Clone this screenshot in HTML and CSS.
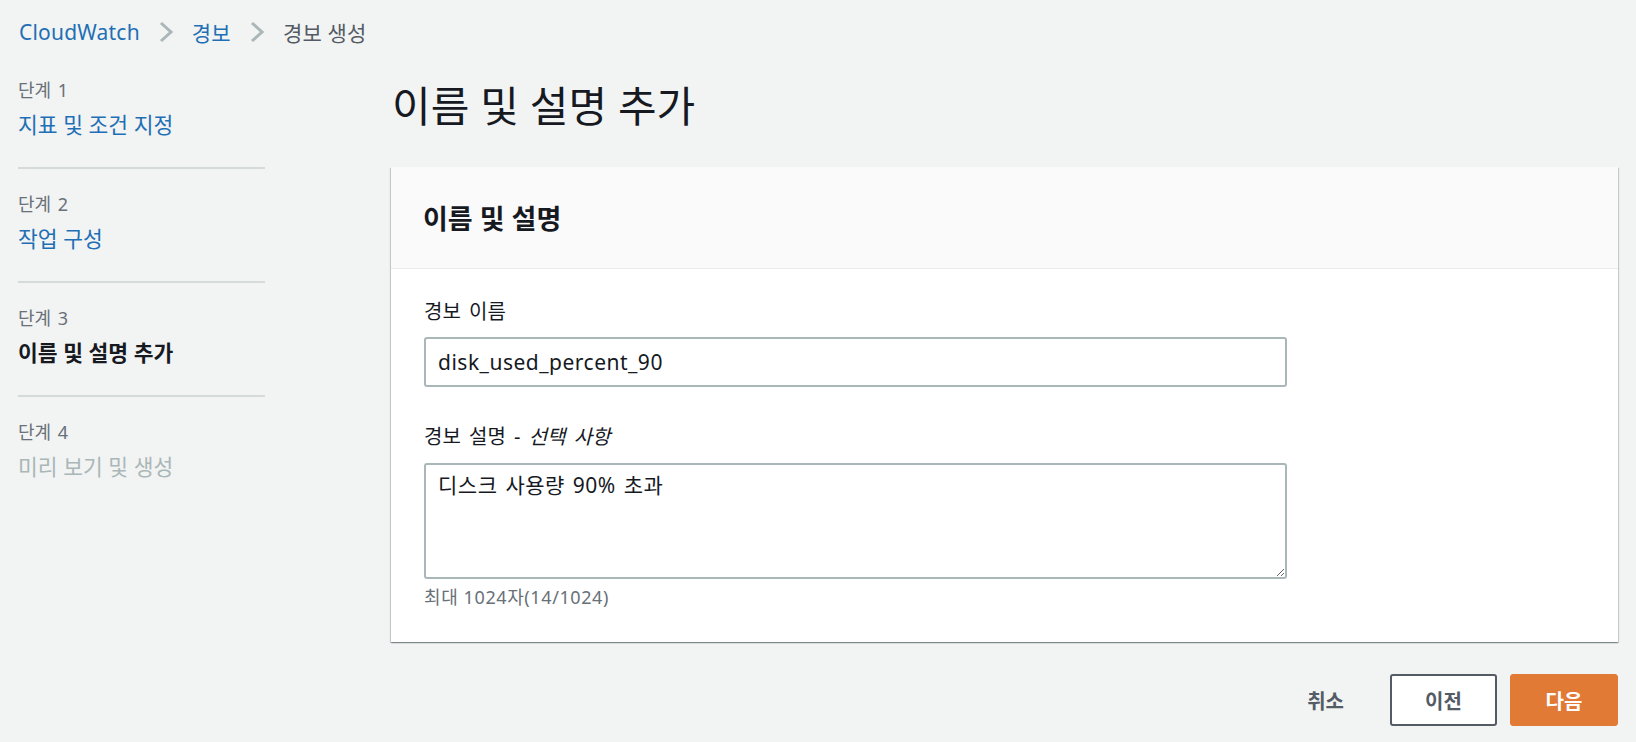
FILE: index.html
```html
<!DOCTYPE html>
<html lang="ko">
<head>
<meta charset="utf-8">
<title>경보 생성 - CloudWatch</title>
<link rel="stylesheet" href="styles.css">
</head>
<body>
<div class="page">
  <nav class="breadcrumb">
    <a class="crumb-link" href="#">CloudWatch</a>
    <svg class="chev" width="16" height="22" viewBox="0 0 16 22"><path d="M3 2 L13 11 L3 20" fill="none" stroke="#aab7b8" stroke-width="3"/></svg>
    <a class="crumb-link" href="#">경보</a>
    <svg class="chev" width="16" height="22" viewBox="0 0 16 22"><path d="M3 2 L13 11 L3 20" fill="none" stroke="#aab7b8" stroke-width="3"/></svg>
    <span class="crumb-current">경보 생성</span>
  </nav>
  <div class="layout">
    <aside class="steps">
      <div class="step">
        <div class="step-label">단계 1</div>
        <a class="step-title link" href="#">지표 및 조건 지정</a>
      </div>
      <div class="step">
        <div class="step-label">단계 2</div>
        <a class="step-title link" href="#">작업 구성</a>
      </div>
      <div class="step">
        <div class="step-label">단계 3</div>
        <div class="step-title current">이름 및 설명 추가</div>
      </div>
      <div class="step last">
        <div class="step-label">단계 4</div>
        <div class="step-title disabled">미리 보기 및 생성</div>
      </div>
    </aside>
    <main class="main">
      <h1 class="title">이름 및 설명 추가</h1>
      <section class="card">
        <header class="card-header">
          <h2 class="card-title">이름 및 설명</h2>
        </header>
        <div class="card-body">
          <label class="field-label" for="alarm-name">경보 이름</label>
          <input class="text-input" id="alarm-name" type="text" value="disk_used_percent_90">
          <label class="field-label second" for="alarm-desc">경보 설명 - <i>선택 사항</i></label>
          <textarea class="text-area" id="alarm-desc">디스크 사용량 90% 초과</textarea>
          <div class="hint">최대 1024자(14/1024)</div>
        </div>
      </section>
      <div class="actions">
        <button class="btn btn-cancel" type="button">취소</button>
        <button class="btn btn-normal" type="button">이전</button>
        <button class="btn btn-primary" type="button">다음</button>
      </div>
    </main>
  </div>
</div>
</body>
</html>
```
FILE: styles.css
```css
* { box-sizing: border-box; }
html, body { margin: 0; padding: 0; }
body {
  background: #f2f3f3;
  color: #16191f;
  font-family: "Noto Sans", "Noto Sans CJK KR", sans-serif;
  width: 1636px;
  height: 742px;
  overflow: hidden;
}
.page { padding: 0 18px 0 19px; }

.breadcrumb {
  height: 64px;
  display: flex;
  align-items: center;
  gap: 18px;
  font-size: 21px;
  letter-spacing: 0.2px;
}
.crumb-link { color: #1f6fb5; text-decoration: none; }
.crumb-current { color: #545b64; }
.chev { display: block; }

.layout {
  display: grid;
  grid-template-columns: 246px 1fr;
  column-gap: 126px;
}

.steps { display: flex; flex-direction: column; margin-left: -1px; }
.step {
  padding: 24px 0 29px;
  border-bottom: 2px solid #d5dbdb;
}
.step:first-child { padding-top: 15px; }
.step.last { border-bottom: none; }
.step-label {
  font-size: 18px;
  line-height: 22px;
  word-spacing: 2px;
  color: #687078;
}
.step-title {
  display: block;
  margin-top: 11px;
  font-size: 21.5px;
  line-height: 26px;
  text-decoration: none;
}
.step-title.link { color: #1f6fb5; }
.step-title.current { color: #16191f; font-weight: 700; }
.step-title.disabled { color: #aab7b8; }

.main { display: flex; flex-direction: column; }
.title {
  margin: 16px 0 0 1px;
  font-size: 42px;
  line-height: 52px;
  font-weight: 400;
  color: #16191f;
}
.card {
  margin-top: 35px;
  background: #fff;
  box-shadow: 0 1px 1px 0 rgba(0,28,36,.3), 1px 1px 1px 0 rgba(0,28,36,.15), -1px 1px 1px 0 rgba(0,28,36,.15);
}
.card-header {
  height: 102px;
  background: #fafafa;
  border-bottom: 1px solid #eaeded;
  display: flex;
  align-items: center;
  padding: 0 32px;
}
.card-title {
  margin: 0;
  font-size: 27px;
  font-weight: 700;
  color: #16191f;
}
.card-body {
  padding: 30px 33px 34px;
  display: flex;
  flex-direction: column;
}
.field-label {
  font-size: 20px;
  line-height: 26px;
  word-spacing: 3px;
  color: #16191f;
}
.field-label i { font-style: italic; }
.field-label.second { margin-top: 37px; }
.text-input, .text-area {
  width: 863px;
  margin-top: 12px;
  border: 2px solid #aab7b8;
  border-radius: 3px;
  background: #fff;
  color: #16191f;
  font-family: "Noto Sans", "Noto Sans CJK KR", sans-serif;
  font-size: 21px;
  letter-spacing: 0.5px;
  padding: 0 12px;
}
.text-input { height: 50px; }
.text-area {
  margin-top: 13px;
  height: 116px;
  padding: 7px 12px;
  line-height: 26px;
  word-spacing: 2px;
  resize: vertical;
}
.hint {
  margin-top: 7px;
  font-size: 18px;
  line-height: 22px;
  letter-spacing: 0.6px;
  color: #687078;
}

.actions {
  margin-top: 32px;
  display: flex;
  justify-content: flex-end;
  gap: 13px;
}
.btn {
  height: 52px;
  font-family: "Noto Sans", "Noto Sans CJK KR", sans-serif;
  font-size: 20px;
  font-weight: 700;
  border-radius: 3px;
  cursor: pointer;
}
.btn-cancel {
  background: transparent;
  border: none;
  color: #545b64;
  padding: 0 33px;
}
.btn-normal {
  width: 107px;
  background: #fff;
  border: 2px solid #545b64;
  color: #545b64;
}
.btn-primary {
  width: 108px;
  background: #e07a35;
  border: 1px solid #e07a35;
  color: #fff;
}
```
